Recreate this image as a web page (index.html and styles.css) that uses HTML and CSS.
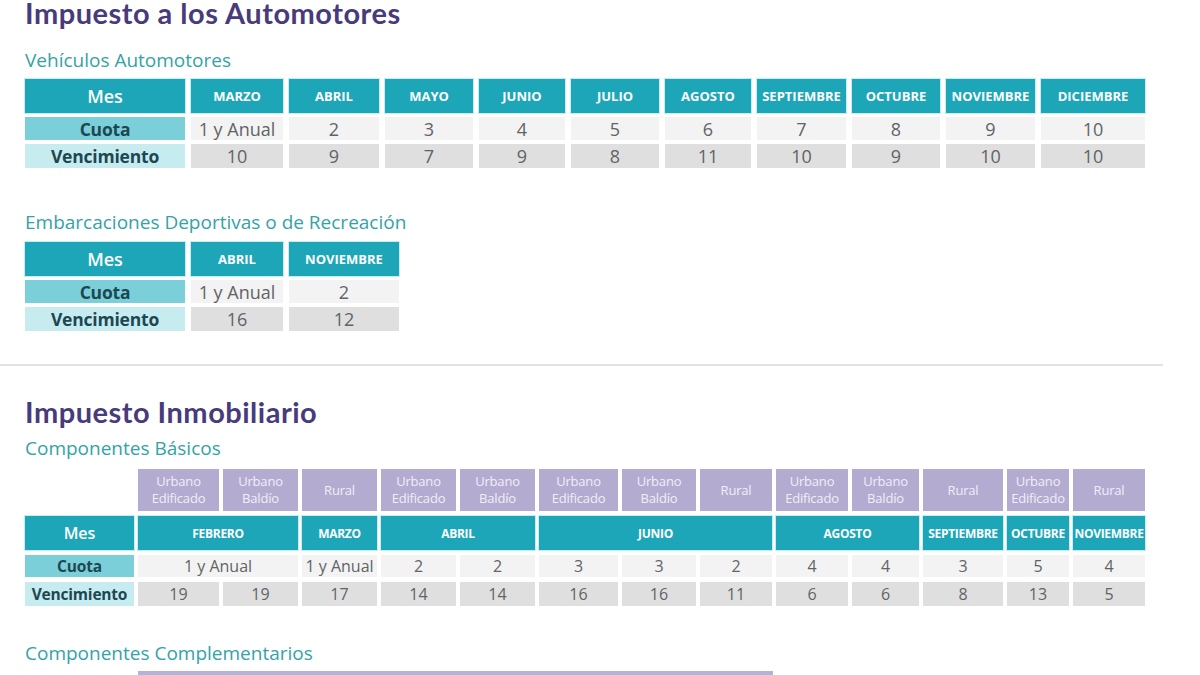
FILE: index.html
```html
<!DOCTYPE html>
<html lang="es">
<head>
<meta charset="utf-8">
<title>Calendario de vencimientos</title>
<link rel="stylesheet" href="styles.css">
</head>
<body>
<main class="page">
  <section class="block block-auto">
    <h1 class="tax-title">Impuesto a los Automotores</h1>
    <h2 class="sub sub-first">Vehículos Automotores</h2>
    <div class="grid grid-veh">
      <div class="c head mes">Mes</div>
      <div class="c head">MARZO</div>
      <div class="c head">ABRIL</div>
      <div class="c head">MAYO</div>
      <div class="c head">JUNIO</div>
      <div class="c head">JULIO</div>
      <div class="c head">AGOSTO</div>
      <div class="c head">SEPTIEMBRE</div>
      <div class="c head">OCTUBRE</div>
      <div class="c head">NOVIEMBRE</div>
      <div class="c head">DICIEMBRE</div>

      <div class="c lab lab-cuota">Cuota</div>
      <div class="c val v-cuota">1 y Anual</div>
      <div class="c val v-cuota">2</div>
      <div class="c val v-cuota">3</div>
      <div class="c val v-cuota">4</div>
      <div class="c val v-cuota">5</div>
      <div class="c val v-cuota">6</div>
      <div class="c val v-cuota">7</div>
      <div class="c val v-cuota">8</div>
      <div class="c val v-cuota">9</div>
      <div class="c val v-cuota">10</div>

      <div class="c lab lab-venc">Vencimiento</div>
      <div class="c val v-venc">10</div>
      <div class="c val v-venc">9</div>
      <div class="c val v-venc">7</div>
      <div class="c val v-venc">9</div>
      <div class="c val v-venc">8</div>
      <div class="c val v-venc">11</div>
      <div class="c val v-venc">10</div>
      <div class="c val v-venc">9</div>
      <div class="c val v-venc">10</div>
      <div class="c val v-venc">10</div>
    </div>

    <h2 class="sub sub-second">Embarcaciones Deportivas o de Recreación</h2>
    <div class="grid grid-emb">
      <div class="c head mes">Mes</div>
      <div class="c head">ABRIL</div>
      <div class="c head">NOVIEMBRE</div>

      <div class="c lab lab-cuota">Cuota</div>
      <div class="c val v-cuota">1 y Anual</div>
      <div class="c val v-cuota">2</div>

      <div class="c lab lab-venc">Vencimiento</div>
      <div class="c val v-venc">16</div>
      <div class="c val v-venc">12</div>
    </div>
  </section>

  <hr class="divider">

  <section class="block block-inmo">
    <h1 class="tax-title tax-title-2">Impuesto Inmobiliario</h1>
    <h2 class="sub sub-basic">Componentes Básicos</h2>
    <div class="grid grid-inmo">
      <div class="c blank"></div>
      <div class="c kind">Urbano<br>Edificado</div>
      <div class="c kind">Urbano<br>Baldío</div>
      <div class="c kind">Rural</div>
      <div class="c kind">Urbano<br>Edificado</div>
      <div class="c kind">Urbano<br>Baldío</div>
      <div class="c kind">Urbano<br>Edificado</div>
      <div class="c kind">Urbano<br>Baldío</div>
      <div class="c kind">Rural</div>
      <div class="c kind">Urbano<br>Edificado</div>
      <div class="c kind">Urbano<br>Baldío</div>
      <div class="c kind">Rural</div>
      <div class="c kind">Urbano<br>Edificado</div>
      <div class="c kind">Rural</div>

      <div class="c head mes">Mes</div>
      <div class="c head span2">FEBRERO</div>
      <div class="c head">MARZO</div>
      <div class="c head span2">ABRIL</div>
      <div class="c head span3">JUNIO</div>
      <div class="c head span2">AGOSTO</div>
      <div class="c head">SEPTIEMBRE</div>
      <div class="c head">OCTUBRE</div>
      <div class="c head">NOVIEMBRE</div>

      <div class="c lab lab-cuota">Cuota</div>
      <div class="c val v-cuota span2">1 y Anual</div>
      <div class="c val v-cuota">1 y Anual</div>
      <div class="c val v-cuota">2</div>
      <div class="c val v-cuota">2</div>
      <div class="c val v-cuota">3</div>
      <div class="c val v-cuota">3</div>
      <div class="c val v-cuota">2</div>
      <div class="c val v-cuota">4</div>
      <div class="c val v-cuota">4</div>
      <div class="c val v-cuota">3</div>
      <div class="c val v-cuota">5</div>
      <div class="c val v-cuota">4</div>

      <div class="c lab lab-venc">Vencimiento</div>
      <div class="c val v-venc">19</div>
      <div class="c val v-venc">19</div>
      <div class="c val v-venc">17</div>
      <div class="c val v-venc">14</div>
      <div class="c val v-venc">14</div>
      <div class="c val v-venc">16</div>
      <div class="c val v-venc">16</div>
      <div class="c val v-venc">11</div>
      <div class="c val v-venc">6</div>
      <div class="c val v-venc">6</div>
      <div class="c val v-venc">8</div>
      <div class="c val v-venc">13</div>
      <div class="c val v-venc">5</div>
    </div>

    <h2 class="sub sub-comp">Componentes Complementarios</h2>
    <div class="comp-row">
      <div class="comp-spacer"></div>
      <div class="comp-bar"></div>
    </div>
  </section>
</main>
</body>
</html>
```

FILE: styles.css
```css
* { box-sizing: border-box; }

html, body {
  margin: 0;
  padding: 0;
  background: #ffffff;
}

body {
  width: 1200px;
  height: 675px;
  overflow: hidden;
  font-family: "Open Sans", "Noto Sans", sans-serif;
}

.page {
  display: flex;
  flex-direction: column;
}

.block {
  padding-left: 25px;
}

.tax-title {
  margin: 0;
  font-family: Lato, "Open Sans", sans-serif;
  font-weight: 700;
  font-size: 29px;
  line-height: 26px;
  letter-spacing: 0.5px;
  color: #473b7c;
}

.tax-title-2 {
  margin-top: 33px;
}

.sub {
  margin: 0;
  font-family: "Open Sans", sans-serif;
  font-weight: 500;
  font-size: 19px;
  line-height: 22px;
  color: #33a3a6;
}

.sub-first { margin-top: 23px; margin-bottom: 8px; }
.sub-second { margin-top: 43px; margin-bottom: 9px; }
.sub-basic { margin-top: 12px; margin-bottom: 10px; }
.sub-comp { margin-top: 36px; margin-bottom: 7px; }

.grid {
  display: grid;
}

.grid-veh {
  grid-template-columns: 160px 92px 90px 88px 86px 88px 86px 89px 88px 89px 104px;
  grid-template-rows: 34px 23px 24px;
  column-gap: 6px;
  row-gap: 4px;
}

.grid-emb {
  grid-template-columns: 160px 92px 110px;
  grid-template-rows: 34px 23px 24px;
  column-gap: 6px;
  row-gap: 4px;
}

.grid-inmo {
  grid-template-columns: 109px 81px 75px 75px 75px 75px 79px 74px 72px 72px 67px 80px 62px 72px;
  grid-template-rows: 42px 34px 22px 24px;
  column-gap: 4px;
  row-gap: 5px;
}

.c {
  display: flex;
  align-items: center;
  justify-content: center;
  text-align: center;
  white-space: nowrap;
}

.span2 { grid-column: span 2; }
.span3 { grid-column: span 3; }

.head {
  background: #1ca6b7;
  color: #ffffff;
  font-weight: 700;
  font-size: 13px;
  letter-spacing: 0;
  box-shadow: 0 0 0 1px #c6eef2;
}

.grid-inmo .head {
  font-size: 12px;
  letter-spacing: -0.3px;
}

.head.mes {
  font-size: 18px;
  font-weight: 600;
  letter-spacing: 0;
}

.grid-inmo .head.mes { font-size: 16px; letter-spacing: 0; }

.lab {
  color: #1d4752;
  font-weight: 700;
  font-size: 17.5px;
  letter-spacing: -0.2px;
}

.grid-inmo .lab { font-size: 15.5px; letter-spacing: -0.2px; }

.lab-cuota { background: #7acfd9; }
.lab-venc { background: #c6ecef; }

.val {
  color: #606466;
  font-weight: 400;
  font-size: 18px;
  letter-spacing: 0;
}

.grid-inmo .val { font-size: 16px; letter-spacing: 0; }

.v-cuota { background: #f3f3f3; }
.v-venc { background: #dfdfdf; }

.kind {
  background: #b4abd1;
  color: #f1eef8;
  font-size: 13px;
  line-height: 17px;
  letter-spacing: -0.2px;
}

.blank { background: transparent; }

.divider {
  margin: 33px 0 0 0;
  width: 1163px;
  height: 2px;
  border: 0;
  background: #e2e2e2;
}

.comp-row {
  display: flex;
  gap: 4px;
}

.comp-spacer { width: 109px; }

.comp-bar {
  width: 635px;
  height: 10px;
  background: #b9b1d4;
}
```
